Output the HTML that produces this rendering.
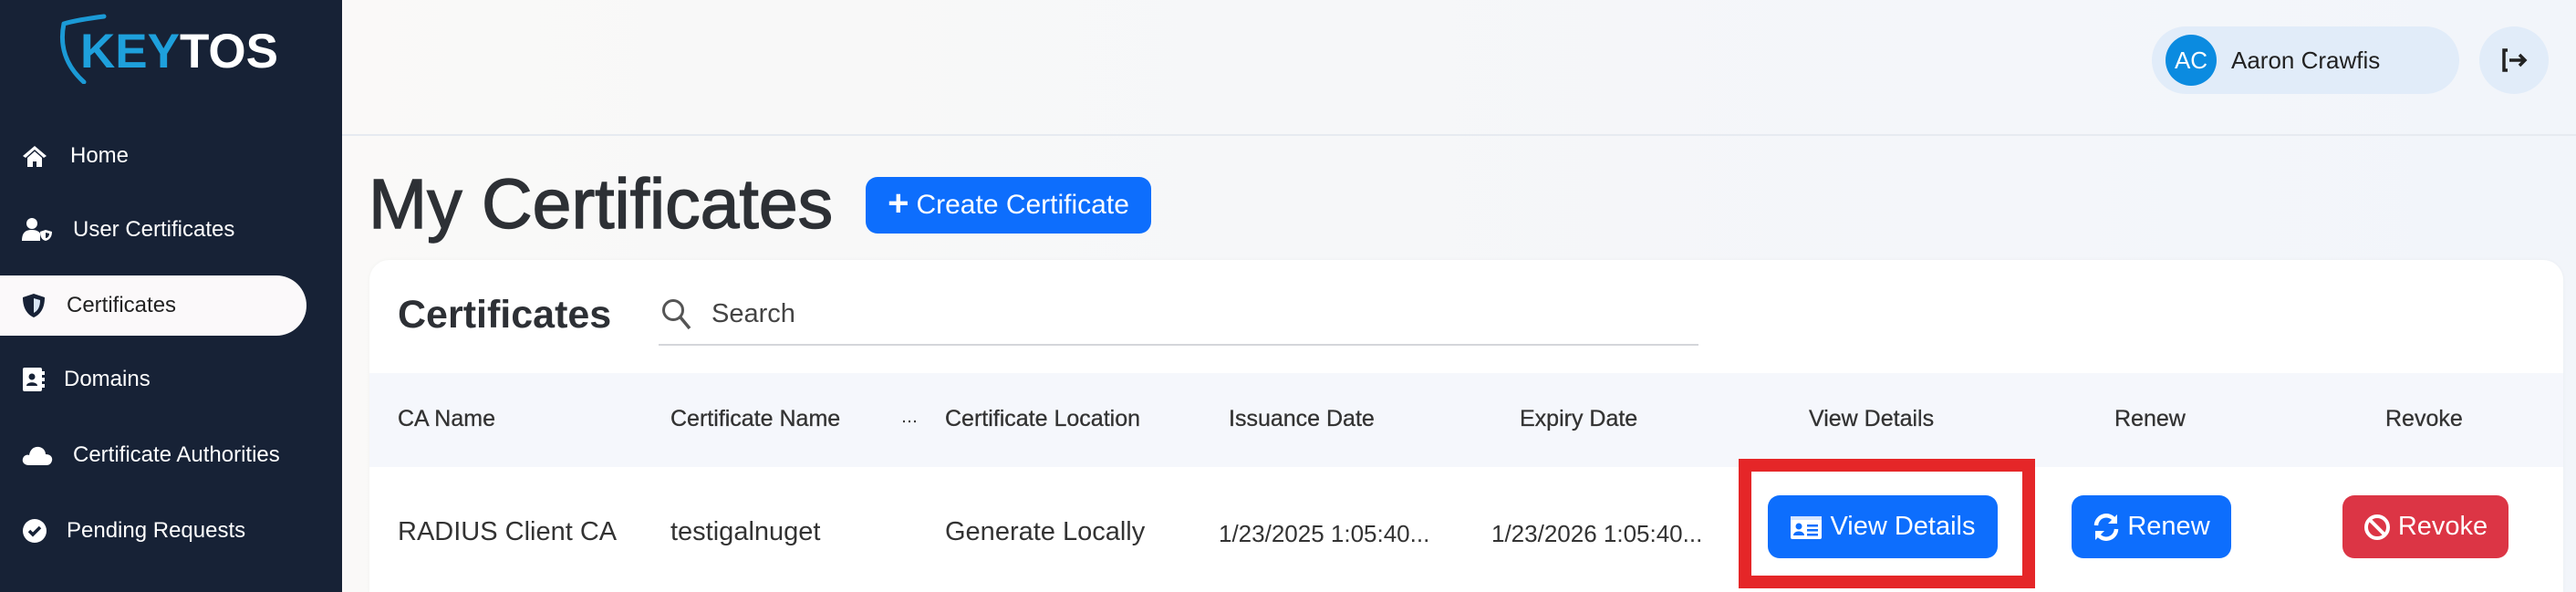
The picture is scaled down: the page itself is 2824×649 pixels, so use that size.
<!DOCTYPE html>
<html><head><meta charset="utf-8"><style>
*{margin:0;padding:0;box-sizing:border-box}
html,body{width:2824px;height:649px;overflow:hidden}
body{font-family:"Liberation Sans",Arial,sans-serif;background:linear-gradient(90deg,#fbfaf7 0%,#f6f7f9 50%,#f2f5fa 100%);position:relative}
.abs{position:absolute}
.side{left:0;top:0;width:375px;height:649px;background:#172236}
.nav{position:absolute;left:0;height:66px;display:flex;align-items:center;color:#fff;font-size:24px}
.nav svg{position:absolute;left:24px}
.pill{left:-40px;top:302px;width:376px;height:66px;background:#fbf9fa;border-radius:33px}
.hdr{left:375px;top:0;width:2449px;height:149px;border-bottom:2px solid #e6eaf1}
.btn{position:absolute;border-radius:13px;color:#fff;font-size:29px;display:flex;align-items:center;justify-content:center;gap:8px}
.th{position:absolute;top:445px;font-size:25px;color:#333;-webkit-text-stroke:0.3px #333;white-space:nowrap}
.td{position:absolute;top:567px;font-size:29px;color:#333;white-space:nowrap}
</style></head><body>
<div class="abs side"></div>
<!-- logo -->
<svg class="abs" style="left:62px;top:12px" width="60" height="80" viewBox="0 0 60 80"><path d="M8 14 C22 10 36 8 52 6 M8 14 C3 38 10 60 30 78" stroke="#1b9ad6" stroke-width="5" fill="none" stroke-linecap="round"/></svg>
<div class="abs" style="left:88px;top:26px;font-size:53px;font-weight:bold;color:#1ea0dc">KEY<span style="color:#fff">TOS</span></div>
<div class="abs pill"></div>
<div class="nav" style="top:138px"><svg width="28" height="26" viewBox="0 0 28 26"><path d="M14 2 L1 13 L4 15 L14 6 L24 15 L27 13 Z" fill="#fff"/><path d="M6 15 L14 8 L22 15 V25 H16 V19 H12 V25 H6 Z" fill="#fff"/></svg><span style="margin-left:77px">Home</span></div>
<div class="nav" style="top:219px"><svg width="34" height="26" viewBox="0 0 34 26"><circle cx="11" cy="6" r="6" fill="#fff"/><path d="M0 25 C0 15 5 13 11 13 C16 13 19 15 20 17 V25 Z" fill="#fff"/><path d="M26 13 L33 15 C33 21 30 24 26 25 C22 24 20 21 20 15 Z" fill="#fff"/><path d="M26 16 L30 17 C30 20 28 22 26 22 Z" fill="#172236"/></svg><span style="margin-left:80px">User Certificates</span></div>
<div class="nav" style="top:302px;color:#222"><svg width="26" height="28" viewBox="0 0 26 28"><path d="M13 1 L25 5 C25 17 20 24 13 27 C6 24 1 17 1 5 Z" fill="#172236"/><path d="M13 6 L20 8 C20 16 17 20 13 22 Z" fill="#d8e6f5"/></svg><span style="margin-left:73px">Certificates</span></div>
<div class="nav" style="top:383px"><svg width="26" height="28" viewBox="0 0 26 28"><rect x="1" y="1" width="21" height="26" rx="2" fill="#fff"/><rect x="22" y="5" width="3" height="4" fill="#fff"/><rect x="22" y="12" width="3" height="4" fill="#fff"/><rect x="22" y="19" width="3" height="4" fill="#fff"/><circle cx="11" cy="11" r="3.5" fill="#172236"/><path d="M5 21 C5 16 17 16 17 21 Z" fill="#172236"/></svg><span style="margin-left:70px">Domains</span></div>
<div class="nav" style="top:466px"><svg width="34" height="24" viewBox="0 0 34 24"><path d="M8 23 C2 23 0 19 1 16 C2 12 6 11 8 12 C9 5 14 2 19 3 C24 4 26 8 26 11 C31 11 34 14 33 18 C32 22 29 23 27 23 Z" fill="#fff"/></svg><span style="margin-left:80px">Certificate Authorities</span></div>
<div class="nav" style="top:549px"><svg width="28" height="28" viewBox="0 0 28 28"><circle cx="14" cy="14" r="13" fill="#fff"/><path d="M8 14 L12 18 L20 10" stroke="#172236" stroke-width="3.5" fill="none"/></svg><span style="margin-left:73px">Pending Requests</span></div>

<div class="abs hdr"></div>
<div class="abs" style="left:2359px;top:29px;width:337px;height:74px;border-radius:37px;background:#e1ecf9"></div>
<div class="abs" style="left:2374px;top:38px;width:56px;height:56px;border-radius:50%;background:#0b8be0;color:#fff;font-size:26px;display:flex;align-items:center;justify-content:center">AC</div>
<div class="abs" style="left:2446px;top:51px;font-size:26px;color:#222">Aaron Crawfis</div>
<div class="abs" style="left:2718px;top:29px;width:76px;height:74px;border-radius:50%;background:#e1ecf9"></div>
<svg class="abs" style="left:2742px;top:52px" width="30" height="28" viewBox="0 0 30 28"><path d="M7 3 H3 V25 H7" stroke="#222" stroke-width="3.5" fill="none"/><path d="M9 14 H26 M20 8 L26 14 L20 20" stroke="#222" stroke-width="3.5" fill="none"/></svg>

<div class="abs" style="left:404px;top:180px;font-size:77px;color:#2d3035;-webkit-text-stroke:1.4px #2d3035">My Certificates</div>
<div class="btn" style="left:949px;top:194px;width:313px;height:62px;background:#0d6efd;font-size:30px"><span style="font-size:40px;font-weight:bold;margin-top:-4px">+</span>Create Certificate</div>

<div class="abs" style="left:405px;top:285px;width:2405px;height:364px;background:#fff;border-radius:22px 22px 0 0;box-shadow:0 0 4px rgba(0,0,0,.04)"></div>
<div class="abs" style="left:436px;top:321px;font-size:43px;font-weight:bold;color:#2d3035">Certificates</div>
<svg class="abs" style="left:724px;top:326px" width="36" height="38" viewBox="0 0 36 38"><circle cx="14" cy="14" r="10.5" stroke="#555" stroke-width="3" fill="none"/><path d="M22 22 L32 34" stroke="#555" stroke-width="3.5"/></svg>
<div class="abs" style="left:780px;top:328px;font-size:29px;color:#444">Search</div>
<div class="abs" style="left:722px;top:377px;width:1140px;height:2px;background:#d4d6da"></div>
<div class="abs" style="left:405px;top:409px;width:2405px;height:103px;background:#f5f7fc"></div>
<div class="th" style="left:436px">CA Name</div>
<div class="th" style="left:735px">Certificate Name</div>
<div class="th" style="left:988px;font-size:18px;top:451px">&middot;&middot;&middot;</div>
<div class="th" style="left:1036px">Certificate Location</div>
<div class="th" style="left:1347px">Issuance Date</div>
<div class="th" style="left:1666px">Expiry Date</div>
<div class="th" style="left:1983px">View Details</div>
<div class="th" style="left:2318px">Renew</div>
<div class="th" style="left:2615px">Revoke</div>
<div class="td" style="left:436px">RADIUS Client CA</div>
<div class="td" style="left:735px">testigalnuget</div>
<div class="td" style="left:1036px">Generate Locally</div>
<div class="td" style="left:1336px;font-size:26px;top:570px">1/23/2025 1:05:40...</div>
<div class="td" style="left:1635px;font-size:26px;top:570px">1/23/2026 1:05:40...</div>
<div class="abs" style="left:1906px;top:503px;width:325px;height:142px;border:14px solid #e52628"></div>
<div class="btn" style="left:1938px;top:543px;width:252px;height:69px;background:#0d6efd"><svg width="36" height="28" viewBox="0 0 36 28"><rect x="1" y="2" width="34" height="25" rx="2" fill="#fff"/><rect x="1" y="2" width="34" height="4" fill="#d6e6ff"/><circle cx="10" cy="13" r="3.5" fill="#0d6efd"/><path d="M4 23 C4 17 16 17 16 23 Z" fill="#0d6efd"/><rect x="19" y="11" width="12" height="2.5" fill="#0d6efd"/><rect x="19" y="16" width="12" height="2.5" fill="#0d6efd"/><rect x="19" y="21" width="12" height="2.5" fill="#0d6efd"/></svg>View Details</div>
<div class="btn" style="left:2271px;top:543px;width:175px;height:69px;background:#0d6efd"><svg width="30" height="32" viewBox="0 0 30 32"><path d="M4 14 A11 11 0 0 1 24 8" stroke="#fff" stroke-width="4.5" fill="none"/><path d="M27 2 V12 H17 Z" fill="#fff"/><path d="M26 18 A11 11 0 0 1 6 24" stroke="#fff" stroke-width="4.5" fill="none"/><path d="M3 30 V20 H13 Z" fill="#fff"/></svg>Renew</div>
<div class="btn" style="left:2568px;top:543px;width:182px;height:69px;background:#dc3545"><svg width="30" height="30" viewBox="0 0 30 30"><circle cx="15" cy="15" r="12" stroke="#fff" stroke-width="4" fill="none"/><path d="M7 7 L23 23" stroke="#fff" stroke-width="4"/></svg>Revoke</div>
</body></html>
